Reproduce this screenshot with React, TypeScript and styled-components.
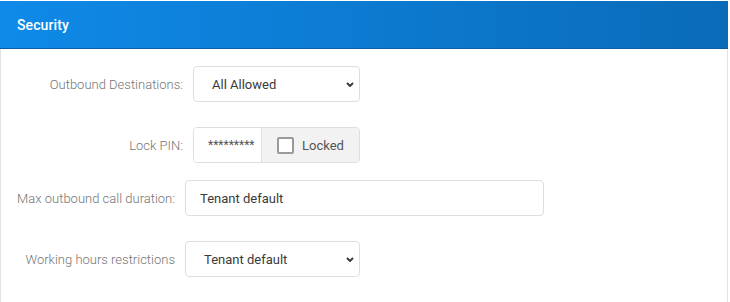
import styled, { createGlobalStyle } from "styled-components";

const Global = createGlobalStyle`
  body {
    margin: 0;
    background: #ffffff;
    font-family: Roboto, "Liberation Sans", Arial, sans-serif;
  }
`;

const Panel = styled.section`
  width: 726px;
  height: 301px;
  margin-top: 1px;
  border-left: 1px solid #e3e3e3;
  border-right: 1px solid #e3e3e3;
`;

const Header = styled.header`
  height: 47px;
  margin: 0 -1px;
  display: flex;
  align-items: center;
  padding-left: 17px;
  background: linear-gradient(to right, #0f8ae8, #0a6bb9);
  border-bottom: 1px solid #0a5ea6;
  color: #ffffff;
  font-size: 14px;
  font-weight: 500;
  letter-spacing: 0.1px;
`;

const Body = styled.div`
  display: flex;
  flex-direction: column;
  padding-top: 17px;
`;

const Group = styled.div<{ $labelWidth: number; $top: number }>`
  display: grid;
  grid-template-columns: ${(p) => p.$labelWidth}px auto;
  column-gap: 10px;
  row-gap: 25px;
  align-items: center;
  margin-top: ${(p) => p.$top}px;
`;

const Label = styled.label`
  text-align: right;
  font-size: 13px;
  font-weight: 300;
  color: #757575;
  white-space: nowrap;
`;

const Field = styled.div<{ $width: number }>`
  width: ${(p) => p.$width}px;
  height: 36px;
  box-sizing: border-box;
  border: 1px solid #dedede;
  border-radius: 4px;
  background: #ffffff;
  display: flex;
  align-items: center;
  overflow: hidden;
`;

const SelectBox = styled.select<{ $pad: number }>`
  appearance: none;
  width: 100%;
  height: 100%;
  border: none;
  background: transparent;
  padding: 0 0 0 ${(p) => p.$pad}px;
  font-family: inherit;
  font-size: 13px;
  color: #3a3a3a;
  outline: none;
`;

const SelectWrap = styled.div`
  position: relative;
  width: 100%;
  height: 100%;
`;

const Chevron = styled.svg`
  position: absolute;
  right: 5px;
  top: 50%;
  margin-top: -2px;
  pointer-events: none;
`;

const TextInput = styled.input<{ $pad: number }>`
  width: 100%;
  height: 100%;
  box-sizing: border-box;
  border: none;
  padding: 0 0 0 ${(p) => p.$pad}px;
  font-family: inherit;
  font-size: 13px;
  color: #3a3a3a;
  background: transparent;
  outline: none;
`;

const PinInput = styled.input`
  width: 68px;
  height: 100%;
  box-sizing: border-box;
  border: none;
  border-right: 1px solid #dedede;
  padding: 0 0 0 14px;
  font-family: inherit;
  font-size: 12px;
  color: #555555;
  outline: none;
`;

const Addon = styled.label`
  flex: 1;
  height: 100%;
  display: flex;
  align-items: center;
  gap: 8px;
  padding-left: 15px;
  background: #f2f2f2;
  font-size: 13px;
  color: #555555;
`;

const Box = styled.span`
  width: 17px;
  height: 17px;
  box-sizing: border-box;
  border: 2px solid #9a9a9a;
  border-radius: 2px;
  background: #ffffff;
`;

function Select({ value, pad }: { value: string; pad: number }) {
  return (
    <SelectWrap>
      <SelectBox $pad={pad} defaultValue={value}>
        <option>{value}</option>
      </SelectBox>
      <Chevron width="8" height="5" viewBox="0 0 8 5">
        <path d="M1 1l3 3 3-3" fill="none" stroke="#333" strokeWidth="1.8" />
      </Chevron>
    </SelectWrap>
  );
}

export default function App() {
  return (
    <>
      <Global />
      <Panel>
        <Header>Security</Header>
        <Body>
          <Group $labelWidth={182} $top={0}>
            <Label>Outbound Destinations:</Label>
            <Field $width={167}>
              <Select value="All Allowed" pad={18} />
            </Field>
            <Label>Lock PIN:</Label>
            <Field $width={167}>
              <PinInput defaultValue="*********" readOnly />
              <Addon>
                <Box />
                Locked
              </Addon>
            </Field>
          </Group>
          <Group $labelWidth={174} $top={17}>
            <Label>Max outbound call duration:</Label>
            <Field $width={359}>
              <TextInput $pad={14} defaultValue="Tenant default" />
            </Field>
            <Label>Working hours restrictions</Label>
            <Field $width={175}>
              <Select value="Tenant default" pad={18} />
            </Field>
          </Group>
        </Body>
      </Panel>
    </>
  );
}
